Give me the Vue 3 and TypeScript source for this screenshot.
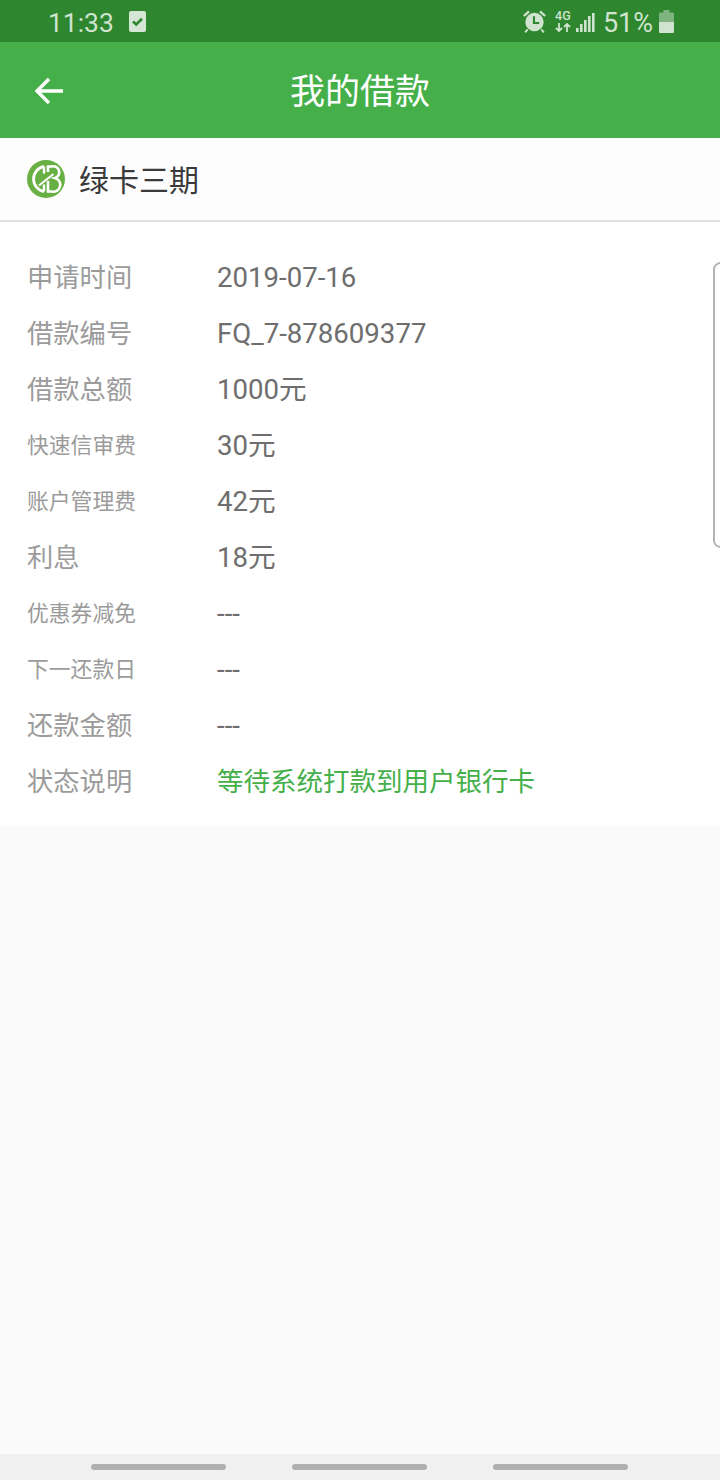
<script setup lang="ts">
interface Row {
  label: string;
  value: string;
  small?: boolean;
  status?: boolean;
}

const rows: Row[] = [
  { label: '申请时间', value: '2019-07-16' },
  { label: '借款编号', value: 'FQ_7-878609377' },
  { label: '借款总额', value: '1000元' },
  { label: '快速信审费', value: '30元', small: true },
  { label: '账户管理费', value: '42元', small: true },
  { label: '利息', value: '18元' },
  { label: '优惠券减免', value: '---', small: true },
  { label: '下一还款日', value: '---', small: true },
  { label: '还款金额', value: '---' },
  { label: '状态说明', value: '等待系统打款到用户银行卡', status: true },
];
</script>

<template>
  <div class="screen">
    <div class="status-bar">
      <div class="status-left">
        <span class="clock">11:33</span>
        <svg class="check" width="17" height="21" viewBox="0 0 17 21">
          <rect width="17" height="21" rx="2" fill="#d5e6d4" />
          <path d="M4 10.500l3.200 3L13 7.800" fill="none" stroke="#2e862f" stroke-width="2.600" />
        </svg>
      </div>
      <div class="status-right">
        <svg class="alarm" width="25" height="25" viewBox="0 0 24 24" fill="#cfe3ce">
          <circle cx="12" cy="12.500" r="8.800" />
          <path d="M1 6L6 1.500 7.500 3 2.500 7.500zM23 6L18 1.500 16.500 3 21.500 7.500z" />
          <path d="M5.500 19.500l-2.500 3M18.500 19.500l2.500 3" stroke="#cfe3ce" stroke-width="1.800" />
          <path d="M11.500 7v6.500h5" fill="none" stroke="#2e862f" stroke-width="2" />
        </svg>
        <div class="net">
          <span class="net-label">4G</span>
          <svg width="16" height="9" viewBox="0 0 16 9" fill="none" stroke="#cfe3ce" stroke-width="1.800">
            <path d="M4 0v8M1 5l3 3 3-3M12 9V1M9 4l3-3 3 3" />
          </svg>
        </div>
        <svg class="signal" width="19" height="19" viewBox="0 0 19 19" fill="#cfe3ce">
          <rect x="0" y="15" width="2.600" height="4" />
          <rect x="4" y="11" width="2.600" height="8" />
          <rect x="8" y="7" width="2.600" height="12" />
          <rect x="12" y="3" width="2.600" height="16" />
          <rect x="16" y="0" width="2.600" height="19" />
        </svg>
        <span class="percent">51%</span>
        <svg width="15" height="23" viewBox="0 0 15 23">
          <path d="M4.500 0h6v2.500H14a1 1 0 0 1 1 1V12H0V3.500a1 1 0 0 1 1-1h3.500z" fill="#7fb37f" />
          <path d="M0 12h15v10a1 1 0 0 1-1 1H1a1 1 0 0 1-1-1z" fill="#cfe3ce" />
        </svg>
      </div>
    </div>

    <header class="app-bar">
      <svg class="back" width="30" height="28" viewBox="0 0 30 28" fill="none" stroke="#fff" stroke-width="3.400">
        <path d="M29 14H3M15 2L3 14l12 12" />
      </svg>
      <h1 class="title">我的借款</h1>
    </header>

    <div class="product">
      <svg width="38" height="38" viewBox="0 0 38 38" fill="none">
        <circle cx="19" cy="19" r="19" fill="#69b044" />
        <path d="M17 6.500A12.700 12.700 0 0 0 17 31.500" stroke="#fff" stroke-width="2.800" />
        <path d="M17 6.500v7M17 24.500v7" stroke="#fff" stroke-width="2.400" />
        <path d="M21 12V6.500h3.500a6 6 0 0 1 3.500 11.500 6.500 6.500 0 0 1-3.500 13.500H21V21" stroke="#fff" stroke-width="2.600" />
        <path d="M12 25.500L26.500 14" stroke="#fff" stroke-width="2.200" />
      </svg>
      <span class="product-name">绿卡三期</span>
    </div>

    <section class="details">
      <div v-for="row in rows" :key="row.label" class="row">
        <span class="label" :class="{ small: row.small }">{{ row.label }}</span>
        <span class="value" :class="{ status: row.status }">{{ row.value }}</span>
      </div>
      <div class="side-handle"></div>
    </section>

    <div class="spacer"></div>

    <div class="nav-bar">
      <span class="nav-pill"></span>
      <span class="nav-pill"></span>
      <span class="nav-pill"></span>
    </div>
  </div>
</template>

<style>
html,
body {
  margin: 0;
  padding: 0;
}
</style>

<style scoped>
.screen {
  width: 720px;
  height: 1480px;
  display: flex;
  flex-direction: column;
  background: #fafafa;
  font-family: Roboto, 'Noto Sans CJK SC', sans-serif;
  overflow: hidden;
}

.status-bar {
  height: 42px;
  flex-shrink: 0;
  background: #2e862f;
  display: flex;
  align-items: center;
  justify-content: space-between;
  padding: 0 46px 0 48px;
  color: #cfe3ce;
}

.status-left,
.status-right {
  display: flex;
  align-items: center;
}

.clock {
  font-size: 26.400px;
  width: 81px;
  line-height: 30px;
  padding-top: 3px;
}

.status-right {
  gap: 6px;
}

.alarm {
  margin-top: 1px;
}

.net {
  display: flex;
  flex-direction: column;
  align-items: center;
  margin-left: 2px;
  gap: 2px;
}

.net-label {
  font-size: 12.500px;
  font-weight: 500;
  line-height: 11px;
}

.signal {
  margin-left: -1px;
  margin-top: 2px;
}

.percent {
  font-size: 27px;
  line-height: 30px;
  padding-top: 3px;
  margin-left: 2px;
}

.app-bar {
  height: 96px;
  flex-shrink: 0;
  background: #45b04a;
  display: flex;
  align-items: center;
  justify-content: center;
  position: relative;
}

.back {
  position: absolute;
  left: 34px;
  top: 35px;
}

.title {
  margin: 0;
  padding-top: 6px;
  font-size: 35px;
  line-height: 40px;
  font-weight: 400;
  color: #fff;
}

.product {
  height: 82px;
  flex-shrink: 0;
  display: flex;
  align-items: center;
  gap: 14px;
  padding-left: 27px;
  background: #fdfdfd;
  border-bottom: 2px solid #dfdfdf;
}

.product-name {
  padding-top: 4px;
  font-size: 30px;
  line-height: 36px;
  color: #3a3a3a;
}

.details {
  position: relative;
  flex-shrink: 0;
  background: #fff;
  padding: 28px 0 16px 27px;
}

.row {
  height: 56px;
  display: flex;
  align-items: center;
}

.label {
  width: 190px;
  font-size: 26.300px;
  line-height: 32px;
  color: #9b9b9b;
}

.label.small {
  font-size: 21.800px;
}

.value {
  font-size: 27.600px;
  line-height: 32px;
  color: #6e6e6e;
}

.value.status {
  font-size: 26.500px;
  color: #45b04a;
}

.side-handle {
  position: absolute;
  right: -8px;
  top: 40px;
  width: 15px;
  height: 286px;
  border: 2px solid #b4b4b4;
  border-radius: 8px;
  box-sizing: border-box;
}

.spacer {
  flex: 1;
}

.nav-bar {
  height: 26px;
  flex-shrink: 0;
  background: #f1f1f1;
  display: flex;
  justify-content: center;
  gap: 66px;
  padding: 10px 2px 0 0;
  box-sizing: border-box;
}

.nav-pill {
  width: 135px;
  height: 6px;
  border-radius: 3px;
  background: #b0b0b0;
}
</style>
